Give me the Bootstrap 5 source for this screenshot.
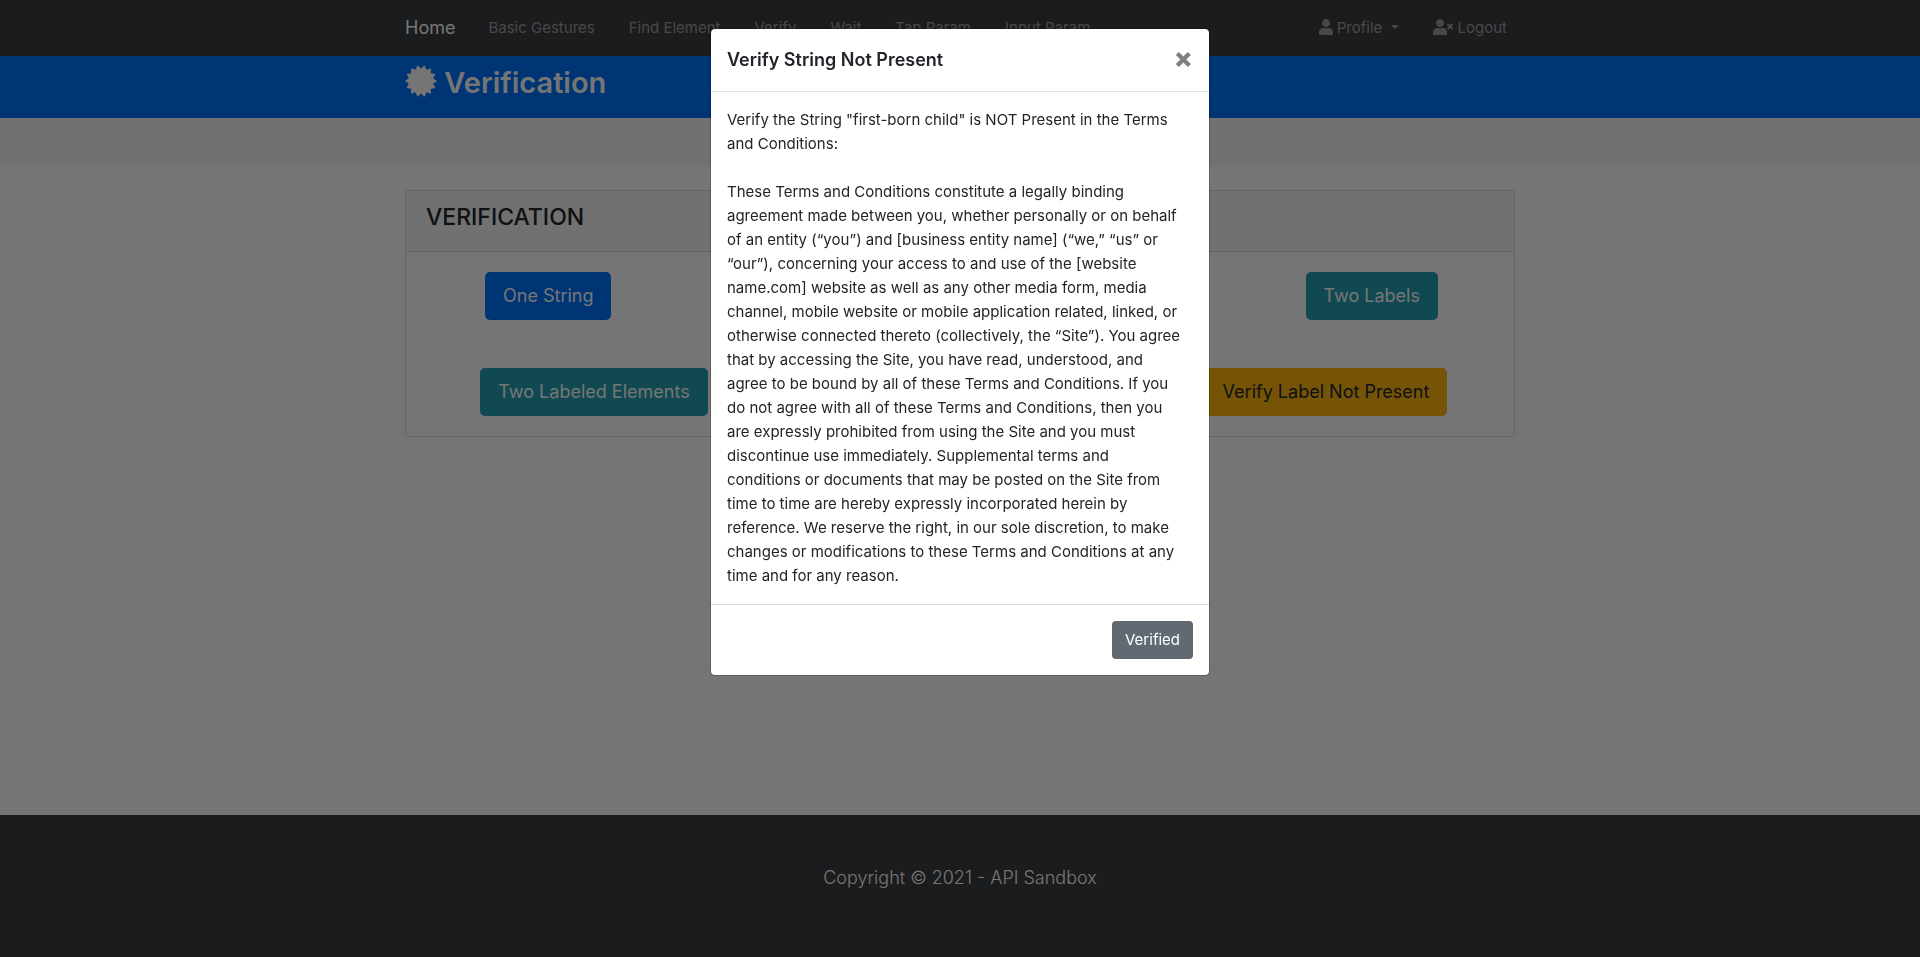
<!DOCTYPE html>
<html lang="en">
<head>
<meta charset="utf-8">
<meta name="viewport" content="width=device-width, initial-scale=1">
<title>Verification - API Sandbox</title>
<link href="https://cdn.jsdelivr.net/npm/bootstrap@5.3.0/dist/css/bootstrap.min.css" rel="stylesheet">
<style>
  :root { --dark-ink: #3b3d41; --brand-blue: #0073ff; }
  body { font-family: Inter, "Liberation Sans", sans-serif; font-size: 15px; line-height: 24px; color: #212529; background: #fff; }
  .page-container { max-width: 1140px; padding-left: 15px; padding-right: 15px; }
  .glyph { height: 16px; fill: currentColor; vertical-align: -2px; }

  .top-bar { background: var(--dark-ink); padding: 8px 0; }
  .top-bar .navbar-brand { font-size: 18px; line-height: 30px; padding: 5px 0; color: #fff; margin-right: 16px; }
  .top-bar .nav-item { padding: 0 9px; }
  .top-bar .nav-item .nav-link { padding: 8px; color: rgba(255, 255, 255, .5); }
  .top-bar .nav-item:last-child { padding-right: 0; }
  .top-bar .dropdown-toggle::after { margin-left: 9px; }

  .page-title { background: var(--brand-blue); color: #fff; padding: 8px 0; }
  .page-title h1 { font-size: 29px; line-height: 38px; font-weight: 600; margin-bottom: 8px; }
  .page-title .glyph { height: 32px; vertical-align: -4px; }
  .action-strip { height: 48px; background: #f4f8f6; }

  .verify-card { border: 1px solid rgba(0, 0, 0, .13); border-radius: 4px; }
  .verify-card .card-header { padding: 12px 20px; background: rgba(0, 0, 0, .03); border-color: rgba(0, 0, 0, .13); }
  .verify-card h2 { font-size: 23px; line-height: 28px; font-weight: 500; margin-bottom: 8px; }
  .verify-card .card-body { padding: 20px; }
  .verify-card .row { --bs-gutter-x: 30px; }
  .verify-card .btn { font-size: 18px; line-height: 30px; padding: 9px 18px; border-radius: 5px; }
  .btn-blue, .btn-blue:hover { background: var(--brand-blue); color: #fff; }
  .btn-teal, .btn-teal:hover { background: #239fb4; color: #fff; }
  .btn-amber, .btn-amber:hover { background: #ffb611; color: #212529; }

  .site-footer { background: var(--dark-ink); color: #fff; }
  .site-footer p { font-size: 18px; line-height: 30px; font-weight: 300; }

  .modal-backdrop.show { --bs-backdrop-opacity: .54; }
  .modal { --bs-modal-border-radius: 5px; --bs-modal-border-color: rgba(0, 0, 0, .2); --bs-modal-inner-border-radius: 4px; }
  .modal-title { font-size: 18px; line-height: 30px; font-weight: 600; }
  .modal .close-btn { font-size: 28px; line-height: 24px; font-weight: 800; color: #7f7f7f; padding: 0 0 4px; border: 0; background: none; }
  .modal .modal-body { padding-right: 24px; }
  .modal .modal-footer { padding: 16px; border-top-color: #d5dee5; }
  .btn-slate, .btn-slate:hover { background: #616a73; color: #fff; border-radius: 4px; font-size: 15px; line-height: 24px; padding: 7px 13px; margin: 0; }
</style>
</head>
<body class="d-flex flex-column min-vh-100">
<nav class="navbar navbar-expand-lg top-bar">
  <div class="container page-container">
    <a class="navbar-brand" href="#">Home</a>
    <ul class="navbar-nav">
      <li class="nav-item"><a class="nav-link" href="#">Basic Gestures</a></li>
      <li class="nav-item"><a class="nav-link" href="#">Find Element</a></li>
      <li class="nav-item"><a class="nav-link" href="#">Verify</a></li>
      <li class="nav-item"><a class="nav-link" href="#">Wait</a></li>
      <li class="nav-item"><a class="nav-link" href="#">Tap Param</a></li>
      <li class="nav-item"><a class="nav-link" href="#">Input Param</a></li>
    </ul>
    <ul class="navbar-nav ms-auto">
      <li class="nav-item"><a class="nav-link dropdown-toggle" href="#"><svg class="glyph" viewBox="0 0 448 512"><path d="M224 256c70.700 0 128-57.300 128-128S294.700 0 224 0 96 57.300 96 128s57.300 128 128 128zm89.600 32h-16.700c-22.200 10.200-46.900 16-72.900 16s-50.600-5.800-72.900-16h-16.700C60.200 288 0 348.200 0 422.400V464c0 26.500 21.500 48 48 48h352c26.500 0 48-21.500 48-48v-41.600c0-74.200-60.200-134.400-134.400-134.400z"/></svg> Profile</a></li>
      <li class="nav-item"><a class="nav-link" href="#"><svg class="glyph" viewBox="0 0 640 512"><path d="M589.600 240l45.600-45.600c6.300-6.300 6.300-16.500 0-22.800l-22.800-22.800c-6.300-6.300-16.500-6.300-22.800 0L544 194.400l-45.600-45.600c-6.300-6.300-16.500-6.300-22.800 0l-22.800 22.800c-6.300 6.300-6.300 16.500 0 22.800l45.600 45.600-45.600 45.600c-6.300 6.300-6.300 16.500 0 22.800l22.800 22.800c6.300 6.300 16.500 6.300 22.800 0l45.600-45.600 45.600 45.600c6.300 6.300 16.500 6.300 22.800 0l22.800-22.800c6.300-6.300 6.300-16.500 0-22.800L589.600 240zM224 256c70.700 0 128-57.300 128-128S294.700 0 224 0 96 57.300 96 128s57.300 128 128 128zm89.600 32h-16.700c-22.200 10.200-46.900 16-72.900 16s-50.600-5.800-72.900-16h-16.700C60.200 288 0 348.200 0 422.400V464c0 26.500 21.500 48 48 48h352c26.500 0 48-21.500 48-48v-41.600c0-74.200-60.200-134.400-134.400-134.400z"/></svg> Logout</a></li>
    </ul>
  </div>
</nav>

<header class="page-title">
  <div class="container page-container">
    <h1><svg class="glyph" viewBox="0 0 32 32" stroke="currentColor" stroke-width="1.400" stroke-linejoin="round">
      <defs><path id="spike" d="M16 .9L18.500 5V27L16 31.100L13.500 27V5Z"/></defs>
      <circle cx="16" cy="16" r="12"/>
      <use href="#spike" transform="rotate(12.860 16 16)"/>
      <use href="#spike" transform="rotate(38.570 16 16)"/>
      <use href="#spike" transform="rotate(64.290 16 16)"/>
      <use href="#spike" transform="rotate(90 16 16)"/>
      <use href="#spike" transform="rotate(115.710 16 16)"/>
      <use href="#spike" transform="rotate(141.430 16 16)"/>
      <use href="#spike" transform="rotate(167.140 16 16)"/>
    </svg> Verification</h1>
  </div>
</header>
<section class="action-strip"></section>

<main class="flex-grow-1 pt-4">
  <div class="container page-container">
    <div class="card verify-card">
      <div class="card-header"><h2>VERIFICATION</h2></div>
      <div class="card-body">
        <div class="row text-center mb-5">
          <div class="col-3"><button type="button" class="btn border-0 btn-blue">One String</button></div>
          <div class="col-3 offset-6"><button type="button" class="btn border-0 btn-teal">Two Labels</button></div>
        </div>
        <div class="row text-center">
          <div class="col-4"><button type="button" class="btn border-0 btn-teal">Two Labeled Elements</button></div>
          <div class="col-4 offset-4"><button type="button" class="btn border-0 btn-amber">Verify Label Not Present</button></div>
        </div>
      </div>
    </div>
  </div>
</main>

<footer class="site-footer text-center py-5">
  <p class="mb-3">Copyright © 2021 - API Sandbox</p>
</footer>

<div class="modal-backdrop show"></div>
<div class="modal d-block" tabindex="-1" role="dialog" aria-modal="true" aria-labelledby="verifyTitle">
  <div class="modal-dialog">
    <div class="modal-content">
      <div class="modal-header">
        <h5 class="modal-title" id="verifyTitle">Verify String Not Present</h5>
        <button type="button" class="close-btn" aria-label="Close">×</button>
      </div>
      <div class="modal-body">Verify the String "first-born child" is NOT Present in the Terms and Conditions:<br><br>These Terms and Conditions constitute a legally binding agreement made between you, whether personally or on behalf of an entity (“you”) and [business entity name] (“we,” “us” or “our”), concerning your access to and use of the [website name.com] website as well as any other media form, media channel, mobile website or mobile application related, linked, or otherwise connected thereto (collectively, the “Site”). You agree that by accessing the Site, you have read, understood, and agree to be bound by all of these Terms and Conditions. If you do not agree with all of these Terms and Conditions, then you are expressly prohibited from using the Site and you must discontinue use immediately. Supplemental terms and conditions or documents that may be posted on the Site from time to time are hereby expressly incorporated herein by reference. We reserve the right, in our sole discretion, to make changes or modifications to these Terms and Conditions at any time and for any reason.</div>
      <div class="modal-footer">
        <button type="button" class="btn border-0 btn-slate">Verified</button>
      </div>
    </div>
  </div>
</div>
<script src="https://cdn.jsdelivr.net/npm/bootstrap@5.3.0/dist/js/bootstrap.bundle.min.js"></script>
</body>
</html>
